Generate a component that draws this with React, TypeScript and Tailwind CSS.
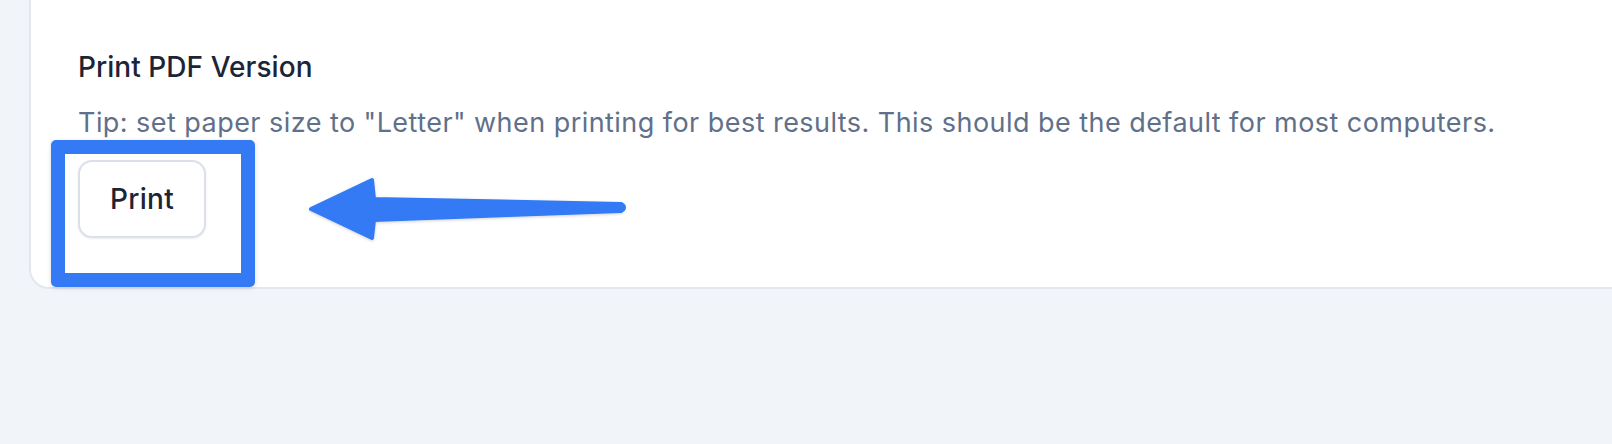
export default function App() {
  return (
    <div className="relative min-h-screen overflow-hidden bg-[#f1f4f9] font-['Inter',sans-serif]">
      <div className="ml-[29px] -mr-6 h-[289px] rounded-bl-[20px] border-2 border-t-0 border-[#e3e6ee] bg-white pl-[47px]">
        <h2 className="pt-[49px] text-[28px] leading-[36px] font-medium tracking-[0.05px] text-[#1c2536]">
          Print PDF Version
        </h2>
        <p className="mt-[20px] text-[27px] leading-[36px] tracking-[0.45px] text-[#617089]">
          Tip: set paper size to "Letter" when printing for best results. This should be the default for most computers.
        </p>
        <button className="mt-[19px] flex h-[78px] w-[128px] items-center justify-center rounded-[14px] border-2 border-[#dce0ea] bg-white text-[28px] font-medium tracking-[0.3px] text-[#1c2536] shadow-[0_1px_2px_rgba(16,24,40,0.08)]">
          Print
        </button>
      </div>

      {/* annotation: highlight box */}
      <div className="absolute left-[51px] top-[140px] h-[147px] w-[204px] rounded-[5px] border-[14px] border-[#347af5] shadow-[0_1px_4px_rgba(0,0,0,0.15)]" />

      {/* annotation: arrow */}
      <svg className="absolute left-0 top-0" width="700" height="300" viewBox="0 0 700 300">
        <defs>
          <filter id="sh" x="-10%" y="-30%" width="120%" height="160%">
            <feDropShadow dx="0" dy="1" stdDeviation="1.5" floodColor="#000" floodOpacity="0.18" />
          </filter>
        </defs>
        <path
          d="M311 209 L372 180 L374 199 L621 204 L621 211 L374 220 L372 238 Z"
          fill="#347af5"
          stroke="#347af5"
          strokeWidth="4"
          strokeLinejoin="round"
          filter="url(#sh)"
        />
        <circle cx="621" cy="207.5" r="5" fill="#347af5" />
      </svg>
    </div>
  );
}
